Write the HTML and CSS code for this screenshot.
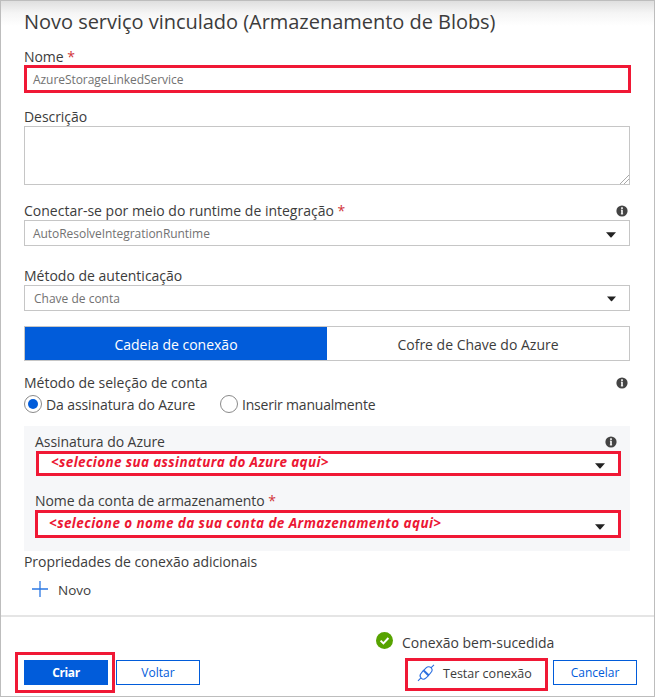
FILE: index.html
```html
<!DOCTYPE html>
<html lang="pt">
<head>
<meta charset="utf-8">
<title>Novo serviço vinculado</title>
<link rel="stylesheet" href="styles.css">
</head>
<body>
<svg class="defs" width="0" height="0" aria-hidden="true">
  <symbol id="info" viewBox="0 0 12 12"><circle cx="6" cy="6" r="5.6" fill="#444"/><path d="M6 2.3v1.6M6 4.8v4.4" fill="none" stroke="#fff" stroke-width="1.6"/><path d="M4.9 5.2H6M4.8 8.9h2.4" fill="none" stroke="#fff" stroke-width=".7"/></symbol>
  <symbol id="caret" viewBox="0 0 10 6"><path d="M0 0.3h10L5.6 5.2q-.6.6-1.2 0z" fill="#222"/></symbol>
</svg>
<div class="dialog">
  <main class="form">
    <h1 class="title">Novo serviço vinculado (Armazenamento de Blobs)</h1>

    <div class="field field-name">
      <label class="label tight">Nome <span class="req">*</span></label>
      <div class="highlight input">AzureStorageLinkedService</div>
    </div>

    <div class="field field-description">
      <label class="label tight">Descrição</label>
      <div class="textarea">
        <svg class="grip" width="9" height="9" viewBox="0 0 9 9"><path d="M0 9L9 0M4 9L9 4" stroke="#aaa" fill="none"/></svg>
      </div>
    </div>

    <div class="field field-runtime">
      <label class="label">Conectar-se por meio do runtime de integração <span class="req">*</span><svg class="info"><use href="#info"/></svg></label>
      <div class="select runtime">AutoResolveIntegrationRuntime<svg class="caret low"><use href="#caret"/></svg></div>
    </div>

    <div class="field field-auth">
      <label class="label">Método de autenticação</label>
      <div class="select">Chave de conta<svg class="caret small"><use href="#caret"/></svg></div>
    </div>

    <div class="tabs">
      <div class="tab active">Cadeia de conexão</div>
      <div class="tab">Cofre de Chave do Azure</div>
    </div>

    <div class="label">Método de seleção de conta<svg class="info"><use href="#info"/></svg></div>
    <div class="radios">
      <label class="radio first"><span class="dot checked"></span>Da assinatura do Azure</label>
      <label class="radio second"><span class="dot"></span>Inserir manualmente</label>
    </div>

    <section class="panel">
      <label class="label tight">Assinatura do Azure<svg class="info"><use href="#info"/></svg></label>
      <div class="highlight pick subscription">&lt;selecione sua assinatura do Azure aqui&gt;<svg class="caret"><use href="#caret"/></svg></div>
      <label class="label tight">Nome da conta de armazenamento <span class="req">*</span></label>
      <div class="highlight pick account">&lt;selecione o nome da sua conta de Armazenamento aqui&gt;<svg class="caret"><use href="#caret"/></svg></div>
    </section>

    <div class="label tight extra">Propriedades de conexão adicionais</div>
    <div class="new"><svg width="16" height="16" viewBox="0 0 16 16"><path d="M8 0v16M0 8h16" stroke="#2b78e4" stroke-width="1.3"/></svg><span>Novo</span></div>
  </main>

  <footer class="footer">
    <div class="status">
      <svg width="17" height="17" viewBox="0 0 17 17"><circle cx="8.5" cy="8.5" r="8.5" fill="#57a300"/><path d="M4.6 8.6l2.8 2.8 5-5.4" fill="none" stroke="#fff" stroke-width="2"/></svg>
      <span>Conexão bem-sucedida</span>
    </div>
    <div class="actions">
      <div class="highlight create"><button class="button primary">Criar</button></div>
      <button class="button">Voltar</button>
      <div class="highlight test">
        <svg width="18" height="18" viewBox="0 0 18 18" fill="none" stroke="#2b6fe0" stroke-width="1.1"><path d="M1 16.8l2.7-2.7M14.2 3.6L17 .8M6.2 6.7l5.1 5.1-2.2 2.1c-1.7 1.6-3.6 1.6-4.9.3s-1.4-3.5.1-5zM6.9 6.1l2.2-2.2c1.5-1.5 3.6-1.5 4.9-.2s1.4 3.4-.2 5L11.9 11z"/></svg>
        <span>Testar conexão</span>
      </div>
      <button class="button">Cancelar</button>
    </div>
  </footer>
</div>
</body>
</html>
```
FILE: styles.css
```css
* { box-sizing: border-box; }
body {
  margin: 0;
  font-family: "Open Sans", sans-serif;
  font-size: 14px;
  color: #3c3c3c;
  background: #fff;
}
svg { display: block; flex: none; }
.defs { position: absolute; }
.dialog {
  display: flex;
  flex-direction: column;
  height: 697px;
  border: 1px solid #bdbdbd;
  background: linear-gradient(#dfdfdf, #f5f5f5 12px, #fff 25px);
}
.form {
  height: 614px;
  padding: 8px 24px 0 23px;
}
.title {
  margin: 0;
  height: 37px;
  font-size: 20px;
  font-weight: 400;
  line-height: 25px;
  letter-spacing: -0.03px;
  white-space: nowrap;
}
.label {
  display: flex;
  align-items: center;
  height: 19px;
  white-space: pre;
}
.tight { letter-spacing: -0.06px; }
.field-name .label { padding-top: 1px; }
.req { color: #d13438; }
.info { width: 12px; height: 12px; margin: 0 2px 0 auto; }
.highlight { border: 3px solid #f01835; }
.input, .select {
  display: flex;
  align-items: center;
  font-size: 12px;
  color: #727272;
}
.input { width: 607px; height: 28px; padding-left: 6px; letter-spacing: -0.06px; }
.field-name { height: 61px; }
.field-description { height: 94px; }
.textarea {
  display: flex;
  align-items: flex-end;
  justify-content: flex-end;
  height: 59px;
  border: 1px solid #c6c6c6;
  background: #fff;
}
.field-runtime { height: 65px; }
.select {
  height: 26px;
  padding: 0 14px 0 9px;
  border: 1px solid #c6c6c6;
}
.runtime { padding-left: 8px; padding-right: 13px; letter-spacing: -0.05px; }
.caret { width: 10px; height: 6px; margin-left: auto; }
.caret.low { margin-top: 4px; }
.caret.small { width: 9px; height: 6px; margin-right: -1px; margin-top: 1px; }
.field-auth { height: 60px; }
.tabs { display: flex; height: 35px; margin-bottom: 12px; border: 1px solid #c6c6c6; }
.tab { flex: 1; line-height: 36px; text-align: center; }
.active { color: #fff; background: #015cda; }
.radios { display: flex; height: 34px; padding-top: 3px; }
.radio { display: flex; gap: 4px; height: 18px; line-height: 20px; }
.first { width: 196px; letter-spacing: -0.1px; }
.second { letter-spacing: -0.2px; }
.dot {
  display: flex;
  width: 18px;
  height: 18px;
  border: 1px solid #8a8a8a;
  border-radius: 50%;
  background: #fff;
}
.checked::after { content: ""; width: 10px; height: 10px; margin: 3px; border-radius: 50%; background: #015cda; }
.panel { height: 125px; padding: 6px 9px 0 11px; background: #f6f7f9; }
.pick {
  display: flex;
  align-items: center;
  padding-right: 13px;
  padding-bottom: 3px;
  font-size: 13.5px;
  font-style: italic;
  font-weight: 700;
  color: #ec1733;
  background: #fff;
  white-space: nowrap;
}
.panel .info { margin-right: 4px; }
.subscription { height: 25px; margin: 0 0 15px 1px; padding-left: 12px; letter-spacing: 0.36px; }
.account { height: 28px; padding-left: 11px; letter-spacing: 0.41px; }
.pick .caret { margin-top: 8px; }
.extra { margin-top: 1px; }
.new { display: flex; align-items: center; gap: 10px; height: 18px; margin: 9px 0 0 8px; font-size: 13.5px; }
.new span { padding-top: 1px; }
.footer { flex: 1; padding: 15px 17px 0 14px; border-top: 2px solid #e5e5e5; }
.status { display: flex; gap: 9px; height: 20px; padding-left: 361px; line-height: 22px; letter-spacing: -0.04px; }
.actions { display: flex; align-items: center; height: 41px; }
.button {
  width: 84px;
  height: 25px;
  padding: 0;
  border: 1px solid #015cda;
  font: 12px/23px "Open Sans", sans-serif;
  color: #015cda;
  background: #fff;
}
.create { width: 100px; height: 41px; padding: 5px 6px; margin-right: 1px; }
.primary { font-weight: 700; letter-spacing: -0.4px; color: #fff; background: #015cda; }
.test {
  display: flex;
  align-items: center;
  gap: 8px;
  width: 143px;
  height: 33px;
  margin: 3px 5px 0 205px;
  padding: 0 0 2px 9px;
  font-size: 12.5px;
}
```
